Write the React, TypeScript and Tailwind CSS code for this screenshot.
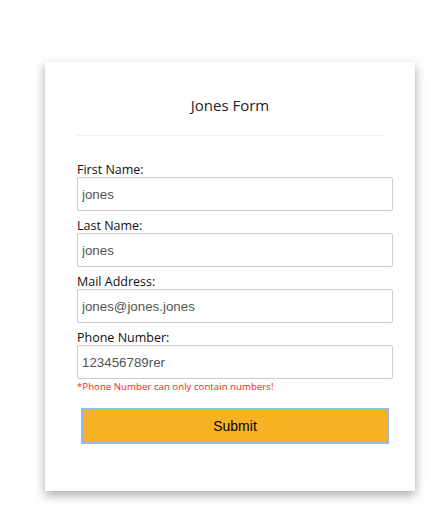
export default function App() {
  const fields = [
    { label: 'First Name:', value: 'jones' },
    { label: 'Last Name:', value: 'jones' },
    { label: 'Mail Address:', value: 'jones@jones.jones' },
    { label: 'Phone Number:', value: '123456789rer' },
  ];

  return (
    <div className="min-h-[516px] w-[440px] bg-white pt-[62px] pl-[45px]" style={{ fontFamily: '"Open Sans", sans-serif' }}>
      <div className="w-[370px] h-[429px] bg-white px-[32px] shadow-[0_4px_10px_rgba(0,0,0,0.35)]">
        <h1 className="pt-[33px] text-center text-[15px] leading-[20px] text-[#222]">Jones Form</h1>
        <hr className="mt-[20px] border-t border-[#eeeeee]" />
        <form className="mt-[26px]">
          {fields.map((f) => (
            <div key={f.label} className="mb-[7px]">
              <label className="block text-[12.5px] leading-[15px] text-[#111]">{f.label}</label>
              <input
                readOnly
                value={f.value}
                className="block w-[316px] h-[34px] px-[4px] border border-[#cccccc] rounded-[2px] text-[13.33px] text-[#555] outline-none"
                style={{ fontFamily: '"Liberation Sans", Arial, sans-serif' }}
              />
            </div>
          ))}
          <p className="-mt-[5px] text-[9.7px] leading-[12px] text-[#ff1a1a]">*Phone Number can only contain numbers!</p>
          <button
            type="button"
            className="mt-[15px] ml-[4px] block w-[308px] h-[36px] bg-[#f5b324] border-2 border-[#94b8f0] text-[14px] text-black"
            style={{ fontFamily: '"Liberation Sans", Arial, sans-serif' }}
          >
            Submit
          </button>
        </form>
      </div>
    </div>
  );
}
